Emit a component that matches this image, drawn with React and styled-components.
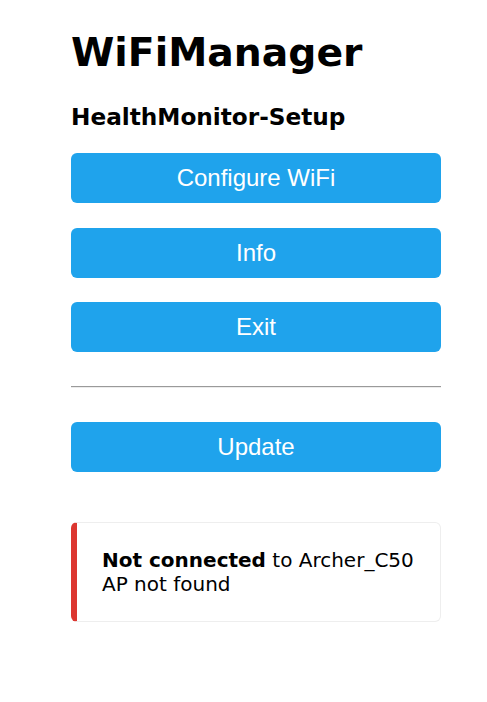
import React from 'react';
import styled, { createGlobalStyle } from 'styled-components';

const GlobalStyle = createGlobalStyle`
  html, body {
    margin: 0;
    padding: 0;
    background: #fff;
  }
  body {
    font-family: "DejaVu Sans", Verdana, sans-serif;
    color: #000;
  }
`;

const Page = styled.div`
  padding: 29.5px 0 0 71px;
`;

const Wrap = styled.div`
  width: 370px;
  display: flex;
  flex-direction: column;
`;

const Title = styled.h1`
  font-size: 39.3px;
  font-weight: bold;
  line-height: 46.6px;
  margin: 0 0 27.3px;
`;

const Subtitle = styled.h3`
  font-size: 23.2px;
  font-weight: bold;
  line-height: 27.2px;
  margin: 0 0 22.5px;
`;

const ButtonStack = styled.div`
  display: flex;
  flex-direction: column;
  gap: 24.6px;
`;

const Button = styled.button`
  display: block;
  width: 100%;
  height: 50px;
  padding: 0;
  border: 0;
  border-radius: 6px;
  background-color: #1fa3ec;
  color: #fff;
  font-family: "Liberation Sans", Arial, sans-serif;
  font-size: 24px;
  line-height: 50px;
  cursor: pointer;
`;

const Divider = styled.hr`
  height: 0;
  margin: 33.6px 0 34.6px;
  border: 0;
  border-top: 1px solid #9a9a9a;
  border-bottom: 1px solid #ececec;
`;

const Message = styled.div`
  margin-top: 50px;
  padding: 25px;
  border: 1px solid #eee;
  border-left: 6px solid ${(props) => props.accent};
  border-radius: 6px;
  font-size: 20px;
  line-height: normal;
`;

const App = () => {
  return (
    <>
      <GlobalStyle />
      <Page>
        <Wrap>
          <Title>WiFiManager</Title>
          <Subtitle>HealthMonitor-Setup</Subtitle>
          <ButtonStack>
            <Button>Configure WiFi</Button>
            <Button>Info</Button>
            <Button>Exit</Button>
          </ButtonStack>
          <Divider />
          <Button>Update</Button>
          <Message accent="#dc3630">
            <strong>Not connected</strong> to Archer_C50
            <br />
            AP not found
          </Message>
        </Wrap>
      </Page>
    </>
  );
};

export default App;
